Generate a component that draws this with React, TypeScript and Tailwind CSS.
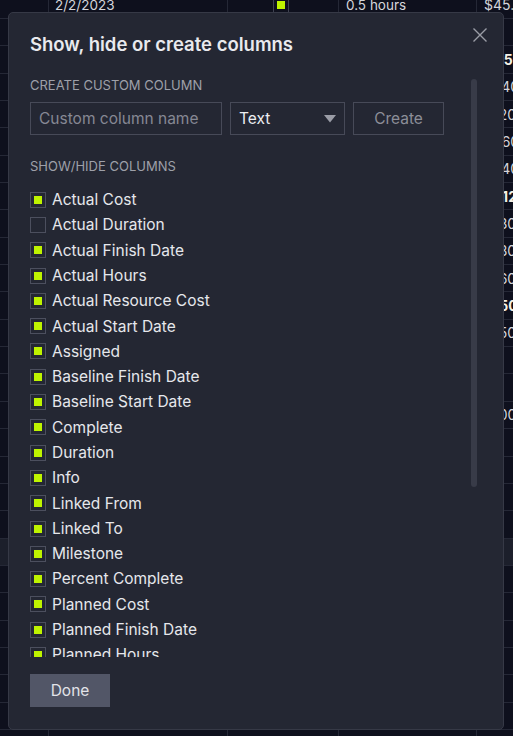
import React from "react";

const columns: { label: string; checked: boolean }[] = [
  { label: "Actual Cost", checked: true },
  { label: "Actual Duration", checked: false },
  { label: "Actual Finish Date", checked: true },
  { label: "Actual Hours", checked: true },
  { label: "Actual Resource Cost", checked: true },
  { label: "Actual Start Date", checked: true },
  { label: "Assigned", checked: true },
  { label: "Baseline Finish Date", checked: true },
  { label: "Baseline Start Date", checked: true },
  { label: "Complete", checked: true },
  { label: "Duration", checked: true },
  { label: "Info", checked: true },
  { label: "Linked From", checked: true },
  { label: "Linked To", checked: true },
  { label: "Milestone", checked: true },
  { label: "Percent Complete", checked: true },
  { label: "Planned Cost", checked: true },
  { label: "Planned Finish Date", checked: true },
  { label: "Planned Hours", checked: true },
  { label: "Planned Resource Cost", checked: true },
  { label: "Planned Start Date", checked: true },
  { label: "Priority", checked: true },
  { label: "Resources", checked: true },
];

const rightValues: { v: string; bold?: boolean }[] = [
  { v: "$45.00" },
  { v: "" },
  { v: "$1,500.00", bold: true },
  { v: "$240.00" },
  { v: "$120.00" },
  { v: "$360.00" },
  { v: "$240.00" },
  { v: "$512.00", bold: true },
  { v: "$130.00" },
  { v: "$130.00" },
  { v: "$160.00" },
  { v: "$150.00", bold: true },
  { v: "$150.00" },
  { v: "" },
  { v: "" },
  { v: "$100.00" },
  { v: "" },
  { v: "" },
  { v: "" },
  { v: "" },
  { v: "" },
  { v: "" },
  { v: "" },
  { v: "" },
  { v: "" },
  { v: "" },
  { v: "" },
  { v: "" },
];

function Check({ checked }: { checked: boolean }) {
  return (
    <div className="w-[16px] h-[16px] shrink-0 border border-[#4c4f5e] flex items-center justify-center">
      {checked && <div className="w-[8px] h-[8px] bg-[#bff400]" />}
    </div>
  );
}

export default function App() {
  return (
    <div className="relative w-[513px] h-[736px] overflow-hidden bg-[#0e101d] font-['Inter',sans-serif]">
      {/* background table */}
      <div className="-mt-[8.35px] w-[560px]">
        {rightValues.map((r, i) => (
          <div
            key={i}
            className={
              "flex h-[27.35px] border-b border-[#252836] text-[13.5px] " +
              (i === 20 ? "bg-[#1c1f2b]" : "")
            }
          >
            <div className="w-[49px] shrink-0 border-r border-[#252836]" />
            <div className="w-[179px] shrink-0 border-r border-[#252836] pl-[6px] flex items-center text-[#d4d5db]">
              {i === 0 ? "2/2/2023" : ""}
            </div>
            <div className="w-[111px] shrink-0 border-r border-[#252836] pl-[45px] flex items-center">
              {i === 0 && (
                <div className="w-[16px] h-[16px] border border-[#3e4150] flex items-center justify-center">
                  <div className="w-[8px] h-[8px] bg-[#bff400]" />
                </div>
              )}
            </div>
            <div className="w-[138px] shrink-0 border-r border-[#252836] pl-[7px] flex items-center text-[#d4d5db]">
              {i === 0 ? "0.5 hours" : ""}
            </div>
            <div
              className={
                "flex-1 pl-[7px] flex items-center whitespace-nowrap text-[14px] " +
                (r.bold ? "font-bold text-[#f4f1e6]" : "text-[#d4d5db]")
              }
            >
              {r.v}
            </div>
          </div>
        ))}
      </div>

      {/* dialog overlay */}
      <div className="absolute left-[8px] top-[12px] w-[496px] h-[718px] rounded-[5px] border border-[#363946] bg-[#242733] flex flex-col">
        <button className="absolute right-[16px] top-[15px] w-[14px] h-[14px]">
          <svg width="14" height="14" viewBox="0 0 14 14" fill="none">
            <path d="M0.5 0.5L13.5 13.5M13.5 0.5L0.5 13.5" stroke="#9a9ca6" strokeWidth="1.4" />
          </svg>
        </button>

        <div className="mt-[17px] ml-[21px] h-[28px] leading-[28px] text-[18.5px] font-semibold text-[#e9eaee]">
          Show, hide or create columns
        </div>

        <div className="relative mt-[14px] h-[585px] overflow-hidden">
          <div className="px-[21px]">
            <div className="mt-[5px] h-[16px] leading-[16px] text-[13px] text-[#9ea0a9]">
              CREATE CUSTOM COLUMN
            </div>
            <div className="mt-[9px] flex gap-[8px] h-[33px]">
              <div className="w-[192px] h-[33px] border border-[#474a58] flex items-center pl-[8px] text-[15.5px] text-[#868893]">
                Custom column name
              </div>
              <div className="w-[115px] h-[33px] border border-[#474a58] flex items-center justify-between pl-[8px] pr-[8px] text-[15.5px] text-[#eceef2]">
                <span>Text</span>
                <svg width="12" height="8" viewBox="0 0 12 8">
                  <path d="M0 0H12L6 7.5Z" fill="#9a9ca6" />
                </svg>
              </div>
              <div className="w-[91px] h-[33px] border border-[#474a58] flex items-center justify-center text-[15.5px] text-[#8c8e98]">
                Create
              </div>
            </div>
            <div className="mt-[23px] h-[16px] leading-[16px] text-[13px] text-[#9ea0a9]">
              SHOW/HIDE COLUMNS
            </div>
            <div className="mt-[13px] flex flex-col">
              {columns.map((c) => (
                <div key={c.label} className="h-[25.3px] flex items-center gap-[6px]">
                  <Check checked={c.checked} />
                  <span className="text-[15.5px] text-[#e6e7ec]">{c.label}</span>
                </div>
              ))}
            </div>
          </div>
          <div className="absolute left-[462px] top-[7px] w-[6px] h-[408px] rounded-full bg-[#383b48]" />
        </div>

        <div className="mt-[17px] ml-[21px] w-[80px] h-[33px] bg-[#525667] flex items-center justify-center text-[15.5px] text-[#e2e3e8]">
          Done
        </div>
      </div>
    </div>
  );
}
